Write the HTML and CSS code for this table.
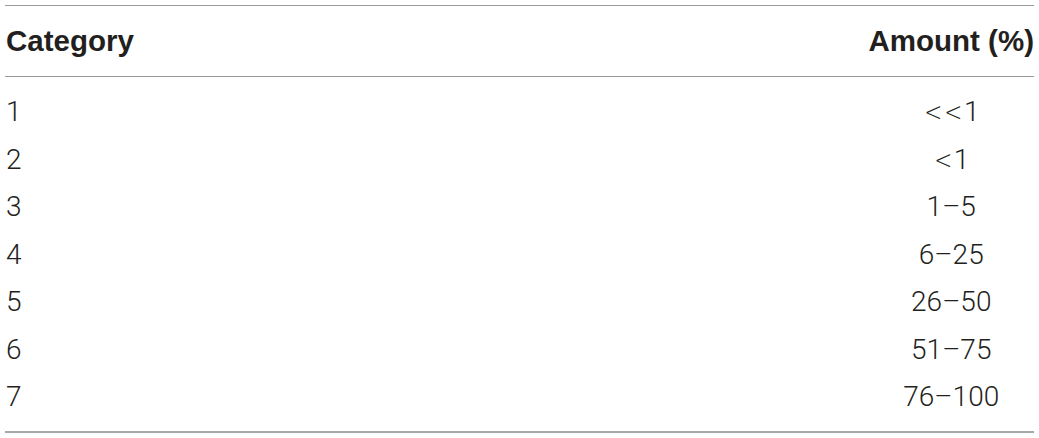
FILE: index.html
```html
<!DOCTYPE html>
<html lang="en">
<head>
<meta charset="utf-8">
<title>Category amounts</title>
<link rel="stylesheet" href="styles.css">
</head>
<body>
<table class="data-table">
  <thead>
    <tr>
      <th class="col-cat">Category</th>
      <th class="col-amt">Amount (%)</th>
    </tr>
  </thead>
  <tbody>
    <tr class="first"><td class="col-cat">1</td><td class="col-amt"><span class="op">&lt;</span><span class="op">&lt;</span>1</td></tr>
    <tr><td class="col-cat">2</td><td class="col-amt"><span class="op">&lt;</span>1</td></tr>
    <tr><td class="col-cat">3</td><td class="col-amt">1–5</td></tr>
    <tr><td class="col-cat">4</td><td class="col-amt">6–25</td></tr>
    <tr><td class="col-cat">5</td><td class="col-amt">26–50</td></tr>
    <tr><td class="col-cat">6</td><td class="col-amt">51–75</td></tr>
    <tr class="last"><td class="col-cat">7</td><td class="col-amt">76–100</td></tr>
  </tbody>
</table>
</body>
</html>
```
FILE: styles.css
```css
html, body {
  margin: 0;
  padding: 0;
  background: #ffffff;
}

body {
  padding: 5px 0 0 5px;
}

.data-table {
  width: 1029px;
  border-collapse: collapse;
  border-top: 1px solid #9a9a9a;
  border-bottom: 2px solid #a8a8a8;
  color: #231f20;
}

.data-table th {
  height: 70px;
  padding: 0 0 0 1px;
  font-family: "Liberation Sans", Arial, sans-serif;
  font-weight: bold;
  font-size: 29.5px;
  vertical-align: middle;
  border-bottom: 1px solid #9a9a9a;
}

.data-table td {
  height: 47.5px;
  padding: 0 0 0 1px;
  font-family: Roboto, "Liberation Sans", sans-serif;
  font-weight: 300;
  font-size: 28px;
  vertical-align: middle;
}

.data-table tr.first td {
  padding-top: 11px;
}

.data-table tr.last td {
  padding-bottom: 10px;
}

.op {
  display: inline-block;
  font-family: "DejaVu Sans", sans-serif;
  font-weight: 200;
  font-size: 27px;
  margin: 0 -1px;
  transform: scaleX(0.8);
}

.col-cat {
  text-align: left;
}

.col-amt {
  width: 1px;
  white-space: nowrap;
  text-align: center;
}
```
